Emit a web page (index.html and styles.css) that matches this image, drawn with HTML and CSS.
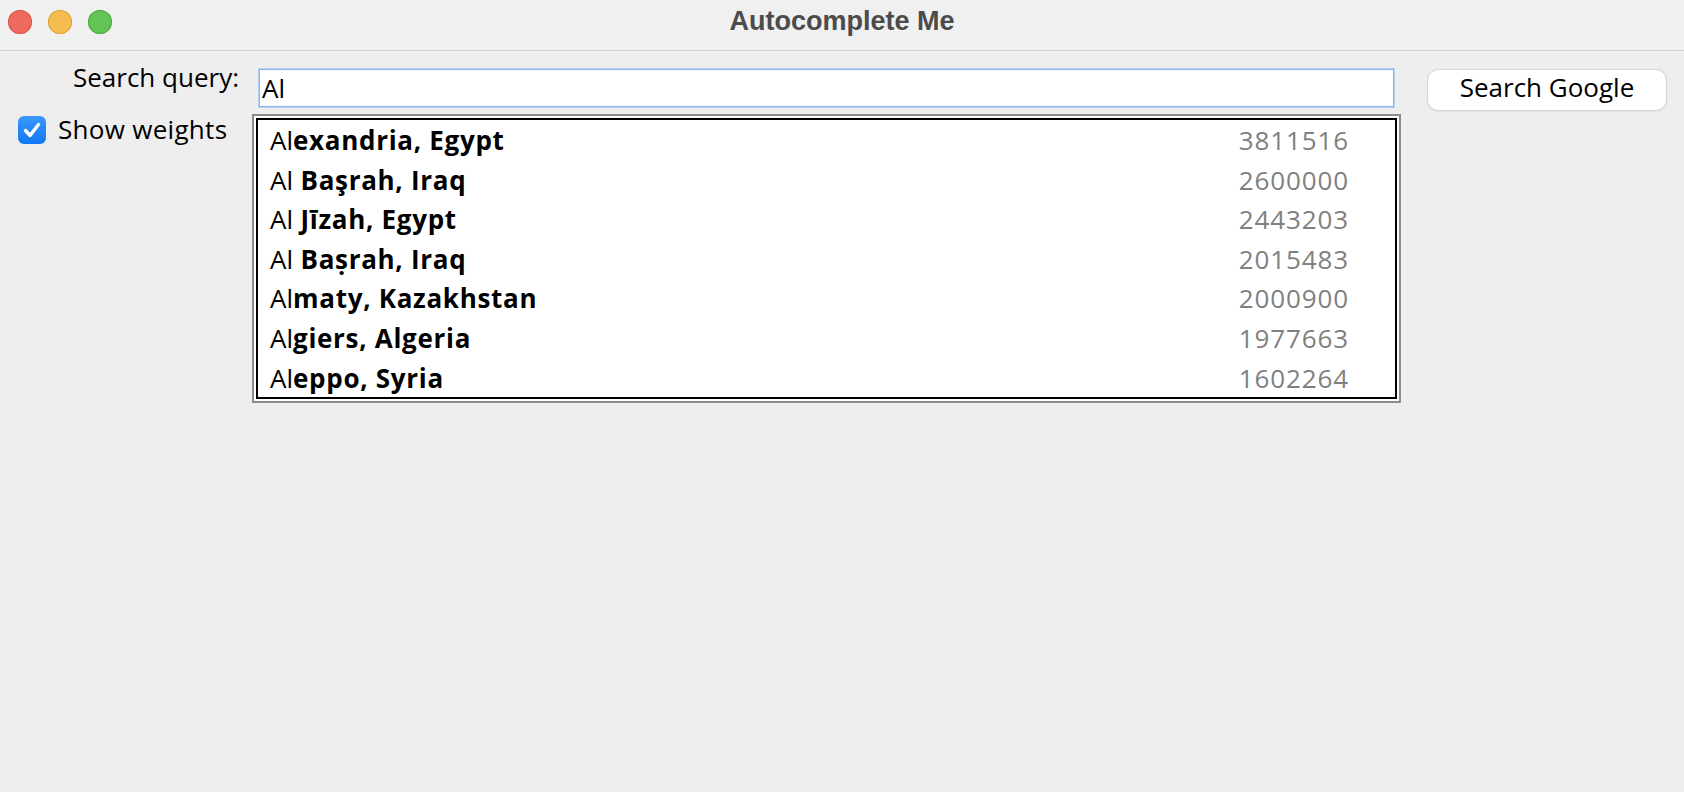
FILE: index.html
```html
<!DOCTYPE html>
<html lang="en">
<head>
<meta charset="utf-8">
<title>Autocomplete Me</title>
<link rel="stylesheet" href="styles.css">
</head>
<body>
<div class="window">
  <header class="titlebar">
    <div class="lights">
      <span class="light red"></span>
      <span class="light yellow"></span>
      <span class="light green"></span>
    </div>
    <div class="title">Autocomplete Me</div>
    <div></div>
  </header>
  <main class="content">
    <label class="query-label" for="q">Search query:</label>
    <div class="field" id="q">Al</div>
    <button class="search-btn" type="button">Search Google</button>

    <label class="check">
      <span class="box">
        <svg viewBox="0 0 28 28" width="28" height="28" aria-hidden="true">
          <path d="M7.5 14.5 L12 19.5 L20.5 8.5" fill="none" stroke="#fff" stroke-width="3.4" stroke-linecap="round" stroke-linejoin="round"/>
        </svg>
      </span>
      <span class="check-text">Show weights</span>
    </label>
    <div class="list-outer">
      <ul class="list">
        <li class="row"><span class="name">Al<b>exandria, Egypt</b></span><span class="weight">3811516</span></li>
        <li class="row"><span class="name">Al<b> Başrah, Iraq</b></span><span class="weight">2600000</span></li>
        <li class="row"><span class="name">Al<b> Jīzah, Egypt</b></span><span class="weight">2443203</span></li>
        <li class="row"><span class="name">Al<b> Baṣrah, Iraq</b></span><span class="weight">2015483</span></li>
        <li class="row"><span class="name">Al<b>maty, Kazakhstan</b></span><span class="weight">2000900</span></li>
        <li class="row"><span class="name">Al<b>giers, Algeria</b></span><span class="weight">1977663</span></li>
        <li class="row"><span class="name">Al<b>eppo, Syria</b></span><span class="weight">1602264</span></li>
      </ul>
    </div>
  </main>
</div>
</body>
</html>
```
FILE: styles.css
```css
* { box-sizing: border-box; }

html, body {
  margin: 0;
  padding: 0;
  height: 100%;
}

body {
  background: #eeeeee;
  font-family: "Open Sans", "DejaVu Sans", sans-serif;
  color: #000;
}

.window {
  display: flex;
  flex-direction: column;
  height: 100%;
}

.titlebar {
  height: 51px;
  background: #f0f0f0;
  border-bottom: 1px solid #d0d0d0;
  display: grid;
  grid-template-columns: 1fr auto 1fr;
  align-items: start;
}

.lights {
  display: flex;
  gap: 16px;
  padding: 10px 0 0 8px;
}

.light {
  width: 24px;
  height: 24px;
  border-radius: 50%;
  display: block;
}

.red { background: #ee6a5e; box-shadow: inset 0 0 0 1px #d9574c; }
.yellow { background: #f5bd4f; box-shadow: inset 0 0 0 1px #dea33a; }
.green { background: #61c454; box-shadow: inset 0 0 0 1px #4fab42; }

.title {
  font-family: "Liberation Sans", Arial, sans-serif;
  font-weight: bold;
  font-size: 27px;
  line-height: 42px;
  color: #4b4b4b;
}

.content {
  display: grid;
  grid-template-columns: 252px 1149px 265px;
  grid-template-rows: auto auto;
  align-items: start;
}

.query-label {
  justify-self: end;
  padding-right: 13px;
  margin-top: 8px;
  font-size: 26px;
  line-height: 36px;
}

.field {
  margin: 18px 7px 7px 7px;
  height: 38px;
  background: #fff;
  border: 1px solid #86b4ee;
  box-shadow: 0 0 0 1px #b5d1f5;
  padding-left: 2px;
  font-size: 26px;
  line-height: 36px;
}

.search-btn {
  margin: 19px 0 0 27px;
  width: 238px;
  height: 40px;
  padding: 0 0 6px 0;
  background: #fff;
  border: none;
  border-radius: 10px;
  box-shadow: 0 0 0 1px #d6d6d6, 0 1px 2px rgba(0, 0, 0, 0.18);
  font-family: "Open Sans", "DejaVu Sans", sans-serif;
  font-size: 26px;
  line-height: 34px;
  color: #000;
}

.check {
  display: flex;
  align-items: center;
  gap: 12px;
  padding-left: 18px;
  margin-top: 2px;
}

.box {
  width: 28px;
  height: 28px;
  border-radius: 6px;
  background: linear-gradient(#3a98fd, #1178f6);
  display: block;
}

.box svg { display: block; }

.check-text {
  font-size: 26px;
  line-height: 28px;
  letter-spacing: 0.3px;
  position: relative;
  top: -1px;
}

.list-outer {
  border: 2px solid #8c8c8c;
  padding: 2px;
  background: #fff;
}

.list {
  list-style: none;
  margin: 0;
  padding: 0;
  border: 2px solid #000;
  background: #fff;
}

.row {
  display: flex;
  justify-content: space-between;
  height: 39.6px;
  padding: 0 46px 0 12px;
  font-size: 26px;
  line-height: 40px;
  white-space: nowrap;
}

.name b {
  font-weight: bold;
  letter-spacing: 0.7px;
}

.weight {
  color: #808080;
  letter-spacing: 0.9px;
}
```
